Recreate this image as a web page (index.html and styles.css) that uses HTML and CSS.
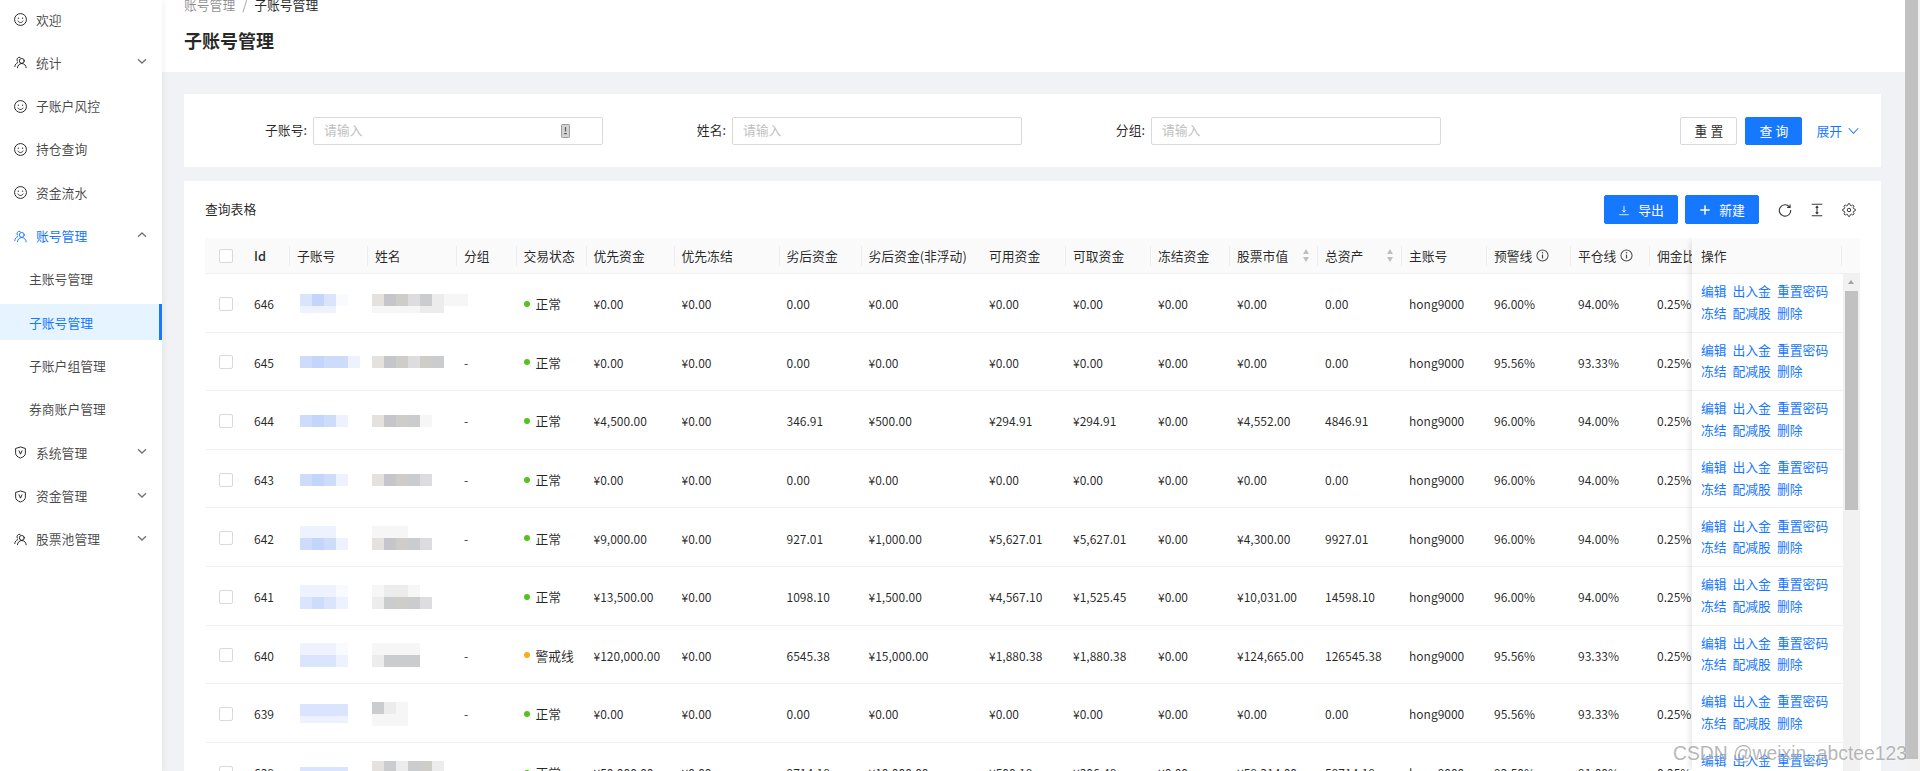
FILE: index.html
```html
<!DOCTYPE html>
<html lang="zh-CN">
<head>
<meta charset="utf-8">
<title>子账号管理</title>
<link rel="stylesheet" href="styles.css">
</head>
<body>
<svg class="defs" aria-hidden="true">
  <symbol id="i-smile" viewBox="0 0 16 16"><circle cx="8" cy="8" r="7.300" fill="none" stroke="currentColor" stroke-width="1.200"/><circle cx="5.400" cy="6.400" r=".8" fill="currentColor"/><circle cx="10.600" cy="6.400" r=".8" fill="currentColor"/><path d="M4.600 9.400c.8 1.500 2 2.300 3.400 2.300s2.600-.8 3.400-2.300" fill="none" stroke="currentColor" stroke-width="1.100"/></symbol>
  <symbol id="i-team" viewBox="0 0 16 16"><g fill="none" stroke="currentColor" stroke-width="1.200" stroke-linecap="round"><circle cx="9.600" cy="6" r="3"/><path d="M4.200 14.500c.2-3 2.400-5.200 5.400-5.200s5.200 2.200 5.400 5.200"/><path d="M7.400 1.600a3.200 3.200 0 0 0-3.400 4.600M4.600 8C2.600 8.800 1.300 10.600 1 13"/></g></symbol>
  <symbol id="i-shield" viewBox="0 0 16 16"><g fill="none" stroke="currentColor" stroke-width="1.200" stroke-linejoin="round"><path d="M8 1.200 14 3v6c0 2.700-2.500 4.600-6 5.800C4.500 13.600 2 11.700 2 9V3z"/><path d="M6 5.500 8 10l2-4.500"/></g></symbol>
  <symbol id="i-down" viewBox="0 0 10 10"><path d="M1 3.200 5 7l4-3.800" fill="none" stroke="currentColor" stroke-width="1.300"/></symbol>
  <symbol id="i-up" viewBox="0 0 10 10"><path d="M1 6.800 5 3l4 3.800" fill="none" stroke="currentColor" stroke-width="1.300"/></symbol>
  <symbol id="i-info" viewBox="0 0 14 14"><circle cx="7" cy="7" r="6" fill="none" stroke="currentColor" stroke-width="1.100"/><path d="M7 6v4.200" stroke="currentColor" stroke-width="1.300"/><circle cx="7" cy="4" r=".8" fill="currentColor"/></symbol>
</svg>

<div class="app">
  <aside class="sidebar">
    <a class="menu-item"><svg class="menu-icon"><use href="#i-smile"/></svg>欢迎</a>
    <a class="menu-item"><svg class="menu-icon"><use href="#i-team"/></svg>统计<svg class="menu-arrow"><use href="#i-down"/></svg></a>
    <a class="menu-item"><svg class="menu-icon"><use href="#i-smile"/></svg>子账户风控</a>
    <a class="menu-item"><svg class="menu-icon"><use href="#i-smile"/></svg>持仓查询</a>
    <a class="menu-item"><svg class="menu-icon"><use href="#i-smile"/></svg>资金流水</a>
    <a class="menu-item is-open"><svg class="menu-icon"><use href="#i-team"/></svg>账号管理<svg class="menu-arrow"><use href="#i-up"/></svg></a>
    <a class="menu-item sub">主账号管理</a>
    <a class="menu-item sub is-active">子账号管理</a>
    <a class="menu-item sub">子账户组管理</a>
    <a class="menu-item sub">券商账户管理</a>
    <a class="menu-item"><svg class="menu-icon"><use href="#i-shield"/></svg>系统管理<svg class="menu-arrow"><use href="#i-down"/></svg></a>
    <a class="menu-item"><svg class="menu-icon"><use href="#i-shield"/></svg>资金管理<svg class="menu-arrow"><use href="#i-down"/></svg></a>
    <a class="menu-item"><svg class="menu-icon"><use href="#i-team"/></svg>股票池管理<svg class="menu-arrow"><use href="#i-down"/></svg></a>
  </aside>

  <main class="content">
    <header class="page-header">
      <nav class="crumbs"><span class="crumb-muted">账号管理</span><span class="crumb-sep">/</span><span>子账号管理</span></nav>
      <h1 class="page-title">子账号管理</h1>
    </header>

    <section class="card filter">
      <label class="field"><span class="field-label">子账号:</span><span class="input"><span class="placeholder">请输入</span><svg class="input-suffix" viewBox="0 0 10 16"><rect x=".5" y=".5" width="9" height="15" rx="1" fill="#d4d4d4" stroke="#8c8c8c"/><path d="M5 3.500v5M3.500 11h3" stroke="#595959" stroke-width="1.400"/></svg></span></label>
      <label class="field"><span class="field-label">姓名:</span><span class="input"><span class="placeholder">请输入</span></span></label>
      <label class="field"><span class="field-label">分组:</span><span class="input"><span class="placeholder">请输入</span></span></label>
      <div class="filter-actions">
        <button class="btn btn-spaced">重置</button>
        <button class="btn btn-primary btn-spaced">查询</button>
        <a class="expand">展开<svg class="expand-arrow" viewBox="0 0 12 8"><path d="M.8 1 6 6.600 11.200 1" fill="none" stroke="currentColor" stroke-width="1.100"/></svg></a>
      </div>
    </section>

    <section class="card table-card">
      <div class="toolbar">
        <span class="toolbar-title">查询表格</span>
        <div class="toolbar-actions">
          <button class="btn btn-primary btn-tool"><svg class="btn-icon" viewBox="0 0 14 14"><path d="M7 2v7.500M4.800 7.300 7 9.500l2.200-2.200M1.500 12.500h11" fill="none" stroke="currentColor"/></svg>导出</button>
          <button class="btn btn-primary btn-tool"><svg class="btn-icon" viewBox="0 0 14 14"><path d="M7 1.500v11M1.500 7h11" fill="none" stroke="currentColor" stroke-width="1.700"/></svg>新建</button>
          <svg class="tool-icon first" viewBox="0 0 16 16"><path d="M13.200 4.600A6.500 6.500 0 1 0 14.500 8M13.800 1.600v3.400h-3.400" fill="none" stroke="currentColor" stroke-width="1.300"/></svg>
          <svg class="tool-icon" viewBox="0 0 16 16"><path d="M2 1.500h12M2 14.500h12M8 3.800v8.400M6.500 5.300 8 3.800l1.500 1.500M6.500 10.700 8 12.200l1.500-1.500" fill="none" stroke="currentColor" stroke-width="1.200"/></svg>
          <svg class="tool-icon" viewBox="0 0 24 24"><g fill="none" stroke="currentColor" stroke-width="1.700"><circle cx="12" cy="12" r="3"/><path d="M19.400 15a1.650 1.650 0 0 0 .33 1.820l.06.06a2 2 0 0 1 0 2.830 2 2 0 0 1-2.830 0l-.06-.06a1.650 1.650 0 0 0-1.820-.33 1.650 1.650 0 0 0-1 1.510V21a2 2 0 0 1-2 2 2 2 0 0 1-2-2v-.09A1.650 1.650 0 0 0 9 19.400a1.650 1.650 0 0 0-1.820.33l-.06.06a2 2 0 0 1-2.830 0 2 2 0 0 1 0-2.830l.06-.06a1.650 1.650 0 0 0 .33-1.820 1.650 1.650 0 0 0-1.510-1H3a2 2 0 0 1-2-2 2 2 0 0 1 2-2h.09A1.650 1.650 0 0 0 4.600 9a1.650 1.650 0 0 0-.33-1.820l-.06-.06a2 2 0 0 1 0-2.830 2 2 0 0 1 2.830 0l.06.06a1.650 1.650 0 0 0 1.820.33H9a1.650 1.650 0 0 0 1-1.510V3a2 2 0 0 1 2-2 2 2 0 0 1 2 2v.09a1.650 1.650 0 0 0 1 1.510 1.650 1.650 0 0 0 1.820-.33l.06-.06a2 2 0 0 1 2.830 0 2 2 0 0 1 0 2.830l-.06.06a1.650 1.650 0 0 0-.33 1.820V9a1.650 1.650 0 0 0 1.510 1H21a2 2 0 0 1 2 2 2 2 0 0 1-2 2h-.09a1.650 1.650 0 0 0-1.510 1z"/></g></svg>
        </div>
      </div>

      <div class="table-box">
        <div class="row head">
          <div class="cell check"><span class="checkbox"></span></div>
          <div class="cell strong">Id</div>
          <div class="cell sep">子账号</div>
          <div class="cell sep">姓名</div>
          <div class="cell sep">分组</div>
          <div class="cell sep">交易状态</div>
          <div class="cell sep">优先资金</div>
          <div class="cell sep">优先冻结</div>
          <div class="cell sep">劣后资金</div>
          <div class="cell sep nowrap">劣后资金(非浮动)</div>
          <div class="cell">可用资金</div>
          <div class="cell sep">可取资金</div>
          <div class="cell sep">冻结资金</div>
          <div class="cell sep sortable">股票市值<span class="sort"><i class="sort-up"></i><i class="sort-down"></i></span></div>
          <div class="cell sep sortable">总资产<span class="sort"><i class="sort-up"></i><i class="sort-down"></i></span></div>
          <div class="cell sep">主账号</div>
          <div class="cell sep">预警线<svg class="info"><use href="#i-info"/></svg></div>
          <div class="cell sep">平仓线<svg class="info"><use href="#i-info"/></svg></div>
          <div class="cell sep nowrap">佣金比例</div>
        </div>

        <div class="row">
          <div class="cell check"><span class="checkbox"></span></div><div class="cell">646</div>
          <div class="cell blur"><div class="mosaic"><div class="line"><span class="b2"></span><span class="b1"></span><span class="b2"></span><span class="b4"></span></div><div class="line short"><span class="b3"></span><span class="b3"></span><span class="b3"></span></div></div></div>
          <div class="cell blur"><div class="mosaic"><div class="line"><span class="g1"></span><span class="g2"></span><span class="g3"></span><span class="g5"></span><span class="g4"></span><span class="g6"></span><span class="g7"></span><span class="g7"></span></div><div class="line short"><span class="g7"></span><span class="g7"></span><span class="g7"></span><span class="g7"></span><span class="g6"></span><span class="g6"></span></div></div></div>
          <div class="cell"></div>
          <div class="cell"><span class="dot ok"></span><span class="status">正常</span></div><div class="cell">¥0.00</div><div class="cell">¥0.00</div><div class="cell">0.00</div><div class="cell">¥0.00</div><div class="cell">¥0.00</div><div class="cell">¥0.00</div><div class="cell">¥0.00</div><div class="cell">¥0.00</div><div class="cell">0.00</div><div class="cell">hong9000</div><div class="cell">96.00%</div><div class="cell">94.00%</div><div class="cell">0.25%</div>
        </div>
        <div class="row">
          <div class="cell check"><span class="checkbox"></span></div><div class="cell">645</div>
          <div class="cell blur"><div class="mosaic"><div class="line"><span class="b0"></span><span class="b1"></span><span class="b0"></span><span class="b0"></span><span class="b3"></span></div></div></div>
          <div class="cell blur"><div class="mosaic"><div class="line"><span class="g1"></span><span class="g2"></span><span class="g3"></span><span class="g5"></span><span class="g3"></span><span class="g4"></span></div></div></div>
          <div class="cell">-</div>
          <div class="cell"><span class="dot ok"></span><span class="status">正常</span></div><div class="cell">¥0.00</div><div class="cell">¥0.00</div><div class="cell">0.00</div><div class="cell">¥0.00</div><div class="cell">¥0.00</div><div class="cell">¥0.00</div><div class="cell">¥0.00</div><div class="cell">¥0.00</div><div class="cell">0.00</div><div class="cell">hong9000</div><div class="cell">95.56%</div><div class="cell">93.33%</div><div class="cell">0.25%</div>
        </div>
        <div class="row">
          <div class="cell check"><span class="checkbox"></span></div><div class="cell">644</div>
          <div class="cell blur"><div class="mosaic"><div class="line"><span class="b0"></span><span class="b1"></span><span class="b0"></span><span class="b3"></span></div></div></div>
          <div class="cell blur"><div class="mosaic"><div class="line"><span class="g1"></span><span class="g2"></span><span class="g3"></span><span class="g4"></span><span class="g7"></span></div></div></div>
          <div class="cell">-</div>
          <div class="cell"><span class="dot ok"></span><span class="status">正常</span></div><div class="cell">¥4,500.00</div><div class="cell">¥0.00</div><div class="cell">346.91</div><div class="cell">¥500.00</div><div class="cell">¥294.91</div><div class="cell">¥294.91</div><div class="cell">¥0.00</div><div class="cell">¥4,552.00</div><div class="cell">4846.91</div><div class="cell">hong9000</div><div class="cell">96.00%</div><div class="cell">94.00%</div><div class="cell">0.25%</div>
        </div>
        <div class="row">
          <div class="cell check"><span class="checkbox"></span></div><div class="cell">643</div>
          <div class="cell blur"><div class="mosaic"><div class="line"><span class="b0"></span><span class="b1"></span><span class="b0"></span><span class="b3"></span></div></div></div>
          <div class="cell blur"><div class="mosaic"><div class="line"><span class="g1"></span><span class="g2"></span><span class="g3"></span><span class="g4"></span><span class="g5"></span></div></div></div>
          <div class="cell">-</div>
          <div class="cell"><span class="dot ok"></span><span class="status">正常</span></div><div class="cell">¥0.00</div><div class="cell">¥0.00</div><div class="cell">0.00</div><div class="cell">¥0.00</div><div class="cell">¥0.00</div><div class="cell">¥0.00</div><div class="cell">¥0.00</div><div class="cell">¥0.00</div><div class="cell">0.00</div><div class="cell">hong9000</div><div class="cell">96.00%</div><div class="cell">94.00%</div><div class="cell">0.25%</div>
        </div>
        <div class="row">
          <div class="cell check"><span class="checkbox"></span></div><div class="cell">642</div>
          <div class="cell blur"><div class="mosaic"><div class="line"><span class="b3"></span><span class="b3"></span><span class="b3"></span></div><div class="line"><span class="b0"></span><span class="b1"></span><span class="b0"></span><span class="b3"></span></div></div></div>
          <div class="cell blur"><div class="mosaic"><div class="line"><span class="g7"></span><span class="g7"></span><span class="g7"></span></div><div class="line"><span class="g1"></span><span class="g2"></span><span class="g3"></span><span class="g4"></span><span class="g5"></span></div></div></div>
          <div class="cell">-</div>
          <div class="cell"><span class="dot ok"></span><span class="status">正常</span></div><div class="cell">¥9,000.00</div><div class="cell">¥0.00</div><div class="cell">927.01</div><div class="cell">¥1,000.00</div><div class="cell">¥5,627.01</div><div class="cell">¥5,627.01</div><div class="cell">¥0.00</div><div class="cell">¥4,300.00</div><div class="cell">9927.01</div><div class="cell">hong9000</div><div class="cell">96.00%</div><div class="cell">94.00%</div><div class="cell">0.25%</div>
        </div>
        <div class="row">
          <div class="cell check"><span class="checkbox"></span></div><div class="cell">641</div>
          <div class="cell blur"><div class="mosaic"><div class="line"><span class="b3"></span><span class="b3"></span><span class="b3"></span><span class="b4"></span></div><div class="line"><span class="b2"></span><span class="b0"></span><span class="b2"></span><span class="b3"></span></div></div></div>
          <div class="cell blur"><div class="mosaic"><div class="line"><span class="g7"></span><span class="g6"></span><span class="g6"></span><span class="g7"></span></div><div class="line"><span class="g6"></span><span class="g4"></span><span class="g3"></span><span class="g4"></span><span class="g5"></span></div></div></div>
          <div class="cell"></div>
          <div class="cell"><span class="dot ok"></span><span class="status">正常</span></div><div class="cell">¥13,500.00</div><div class="cell">¥0.00</div><div class="cell">1098.10</div><div class="cell">¥1,500.00</div><div class="cell">¥4,567.10</div><div class="cell">¥1,525.45</div><div class="cell">¥0.00</div><div class="cell">¥10,031.00</div><div class="cell">14598.10</div><div class="cell">hong9000</div><div class="cell">96.00%</div><div class="cell">94.00%</div><div class="cell">0.25%</div>
        </div>
        <div class="row">
          <div class="cell check"><span class="checkbox"></span></div><div class="cell">640</div>
          <div class="cell blur"><div class="mosaic"><div class="line"><span class="b3"></span><span class="b3"></span><span class="b3"></span><span class="b4"></span></div><div class="line"><span class="b2"></span><span class="b2"></span><span class="b2"></span><span class="b3"></span></div></div></div>
          <div class="cell blur"><div class="mosaic"><div class="line"><span class="g7"></span><span class="g7"></span><span class="g7"></span><span class="g7"></span></div><div class="line"><span class="g6"></span><span class="g4"></span><span class="g4"></span><span class="g4"></span></div></div></div>
          <div class="cell">-</div>
          <div class="cell"><span class="dot warn"></span><span class="status">警戒线</span></div><div class="cell">¥120,000.00</div><div class="cell">¥0.00</div><div class="cell">6545.38</div><div class="cell">¥15,000.00</div><div class="cell">¥1,880.38</div><div class="cell">¥1,880.38</div><div class="cell">¥0.00</div><div class="cell">¥124,665.00</div><div class="cell">126545.38</div><div class="cell">hong9000</div><div class="cell">95.56%</div><div class="cell">93.33%</div><div class="cell">0.25%</div>
        </div>
        <div class="row">
          <div class="cell check"><span class="checkbox"></span></div><div class="cell">639</div>
          <div class="cell blur"><div class="mosaic"><div class="line"><span class="b2"></span><span class="b2"></span><span class="b2"></span><span class="b2"></span></div><div class="line short"><span class="b3"></span><span class="b3"></span><span class="b3"></span><span class="b3"></span></div></div></div>
          <div class="cell blur"><div class="mosaic"><div class="line"><span class="g4"></span><span class="g6"></span><span class="g7"></span></div><div class="line"><span class="g7"></span><span class="g7"></span><span class="g7"></span></div></div></div>
          <div class="cell">-</div>
          <div class="cell"><span class="dot ok"></span><span class="status">正常</span></div><div class="cell">¥0.00</div><div class="cell">¥0.00</div><div class="cell">0.00</div><div class="cell">¥0.00</div><div class="cell">¥0.00</div><div class="cell">¥0.00</div><div class="cell">¥0.00</div><div class="cell">¥0.00</div><div class="cell">0.00</div><div class="cell">hong9000</div><div class="cell">95.56%</div><div class="cell">93.33%</div><div class="cell">0.25%</div>
        </div>
        <div class="row">
          <div class="cell check"><span class="checkbox"></span></div><div class="cell">638</div>
          <div class="cell blur"><div class="mosaic"><div class="line"><span class="b2"></span><span class="b2"></span><span class="b2"></span><span class="b2"></span></div></div></div>
          <div class="cell blur"><div class="mosaic"><div class="line"><span class="g1"></span><span class="g4"></span><span class="g6"></span><span class="g4"></span><span class="g3"></span><span class="g6"></span></div><div class="line"><span class="g7"></span><span class="g6"></span><span class="g6"></span><span class="g6"></span></div></div></div>
          <div class="cell">-</div>
          <div class="cell"><span class="dot ok"></span><span class="status">正常</span></div><div class="cell">¥50,000.00</div><div class="cell">¥0.00</div><div class="cell">9714.18</div><div class="cell">¥10,000.00</div><div class="cell">¥500.18</div><div class="cell">¥306.48</div><div class="cell">¥0.00</div><div class="cell">¥58,314.00</div><div class="cell">59714.18</div><div class="cell">hong9000</div><div class="cell">92.50%</div><div class="cell">91.00%</div><div class="cell">0.25%</div>
        </div>

        <div class="fixed-col">
          <div class="fixed-head">操作</div>
          <div class="fixed-body">
            <div class="fixed-rows">
              <div class="op-row"><a>编辑</a><a>出入金</a><a>重置密码</a><a>冻结</a><a>配减股</a><a>删除</a></div>
              <div class="op-row"><a>编辑</a><a>出入金</a><a>重置密码</a><a>冻结</a><a>配减股</a><a>删除</a></div>
              <div class="op-row"><a>编辑</a><a>出入金</a><a>重置密码</a><a>冻结</a><a>配减股</a><a>删除</a></div>
              <div class="op-row"><a>编辑</a><a>出入金</a><a>重置密码</a><a>冻结</a><a>配减股</a><a>删除</a></div>
              <div class="op-row"><a>编辑</a><a>出入金</a><a>重置密码</a><a>冻结</a><a>配减股</a><a>删除</a></div>
              <div class="op-row"><a>编辑</a><a>出入金</a><a>重置密码</a><a>冻结</a><a>配减股</a><a>删除</a></div>
              <div class="op-row"><a>编辑</a><a>出入金</a><a>重置密码</a><a>冻结</a><a>配减股</a><a>删除</a></div>
              <div class="op-row"><a>编辑</a><a>出入金</a><a>重置密码</a><a>冻结</a><a>配减股</a><a>删除</a></div>
              <div class="op-row"><a>编辑</a><a>出入金</a><a>重置密码</a><a>冻结</a><a>配减股</a><a>删除</a></div>
            </div>
            <div class="inner-scroll"><i class="inner-arrow"></i><i class="inner-thumb"></i></div>
          </div>
        </div>
      </div>
    </section>
  </main>

  <div class="page-scroll"><i class="page-thumb"></i></div>
</div>
<div class="watermark">CSDN @weixin_abctee123</div>
</body>
</html>
```

FILE: styles.css
```css
* { box-sizing: border-box; }
html, body { margin: 0; height: 771px; overflow: hidden; }
body {
  font-family: "Noto Sans CJK SC", "Noto Sans", sans-serif;
  font-size: 12.800px;
  color: rgba(0, 0, 0, .85);
  background: #f0f2f5;
}
.defs { display: none; }
.app { display: flex; height: 771px; }

/* sidebar */
.sidebar {
  flex: 0 0 162px;
  background: #fff;
  display: flex;
  flex-direction: column;
  gap: 7.33px;
  padding-top: 1px;
  box-shadow: 2px 0 6px rgba(0, 21, 41, .05);
  position: relative;
  z-index: 1;
}
.menu-item {
  height: 36px;
  display: flex;
  align-items: center;
  padding-left: 14px;
  color: rgba(0, 0, 0, .72);
}
.menu-icon { width: 13px; height: 13px; margin-right: 9px; margin-top: 1px; flex: none; color: rgba(0, 0, 0, .85); }
.menu-arrow { width: 10px; height: 10px; margin-left: auto; margin-right: 15px; margin-top: -2px; color: rgba(0, 0, 0, .55); }
.menu-item.is-open, .menu-item.is-open .menu-icon { color: #1677ff; }
.menu-item.sub { padding-left: 29px; }
.menu-item.is-active { color: #1677ff; background: #e6f4ff; border-right: 3px solid #1677ff; }

/* content */
.content { flex: 1; min-width: 0; display: flex; flex-direction: column; }
.page-header { height: 72px; background: #fff; padding-left: 22px; flex: none; }
.crumbs { display: flex; height: 22px; margin-top: -6px; line-height: 22px; }
.crumb-muted { color: rgba(0, 0, 0, .45); }
.crumb-sep { margin: 0 7px; color: rgba(0, 0, 0, .45); }
.page-title { margin: 11px 0 0; font-size: 18px; line-height: 26px; font-weight: 600; }

.card { background: #fff; margin: 0 24px 0 22px; }
.filter {
  margin-top: 22px;
  height: 73px;
  flex: none;
  display: grid;
  grid-template-columns: repeat(3, 419px) 1fr;
  align-items: center;
  padding-right: 22px;
}
.field { display: flex; justify-content: flex-end; align-items: center; gap: 6px; }
.field-label, .placeholder, .toolbar-title { padding-bottom: 2px; }
.input {
  width: 290px;
  height: 28px;
  border: 1px solid #d9d9d9;
  border-radius: 2px;
  display: flex;
  align-items: center;
  justify-content: space-between;
  padding: 0 32px 0 10px;
}
.placeholder { color: #bfbfbf; }
.input-suffix { width: 9px; height: 14px; }
.filter-actions { display: flex; justify-content: flex-end; align-items: center; gap: 8px; }
.btn {
  height: 28px;
  border: 1px solid #d9d9d9;
  border-radius: 2px;
  background: #fff;
  font: inherit;
  color: rgba(0, 0, 0, .85);
  padding: 0;
  display: inline-flex;
  align-items: center;
  justify-content: center;
}
.btn-spaced { width: 57px; letter-spacing: 3px; padding-left: 3px; }
.btn-primary { background: #1677ff; border-color: #1677ff; color: #fff; }
.expand { display: flex; align-items: center; color: #1677ff; margin-left: 6px; }
.expand-arrow { width: 11px; height: 8px; margin-left: 6px; }

/* table card */
.table-card { margin-top: 14px; flex: 1; min-height: 0; padding: 14px 21px 0; overflow: hidden; }
.toolbar { display: flex; justify-content: space-between; align-items: center; height: 29px; margin-bottom: 14px; }
.toolbar-actions { display: flex; align-items: center; gap: 7px; }
.btn-tool { width: 74px; height: 29px; gap: 8px; }
.btn-icon { width: 12px; height: 12px; }
.tool-icon { width: 14px; height: 14px; margin-left: 11px; color: rgba(0, 0, 0, .78); }
.tool-icon.first { margin-left: 12px; }
.tool-icon:last-child { margin-right: 4px; }

.table-box { position: relative; height: 533px; overflow: hidden; }
.row {
  display: grid;
  grid-template-columns: 41px 43px 78px 89px 59.5px 70px 88px 105px 82px 120.5px 84px 85px 79px 88px 84px 85px 84px 79px 1fr;
  height: 58.6px;
  padding-top: 2px;
  align-items: center;
  border-bottom: 1px solid #f0f0f0;
  font-size: 12px;
}
.row.head { height: 36px; padding-top: 0; background: #fafafa; font-size: 12.800px; }
.status { font-size: 12.800px; }
.cell { padding-left: 8px; white-space: nowrap; position: relative; display: flex; align-items: center; min-width: 0; }
.cell.check { padding-left: 14px; }
.cell.strong { font-weight: 500; }
.cell.blur { padding-left: 11px; }
.cell.blur + .cell.blur { padding-left: 5px; }
.head .cell.sep::before {
  content: "";
  position: absolute;
  left: 0;
  top: 50%;
  width: 1px;
  height: 20px;
  margin-top: -10px;
  background: #ededed;
}
.checkbox { width: 14px; height: 14px; border: 1px solid #d9d9d9; border-radius: 2px; background: #fff; display: block; }
.sortable { justify-content: space-between; padding-right: 8px; }
.sort { display: flex; flex-direction: column; gap: 3px; }
.sort i { display: block; width: 0; height: 0; border-left: 3.500px solid transparent; border-right: 3.500px solid transparent; }
.sort-up { border-bottom: 5px solid #bfbfbf; }
.sort-down { border-top: 5px solid #bfbfbf; }
.info { width: 13px; height: 13px; margin-left: 4px; color: rgba(0, 0, 0, .7); }
.dot { width: 6px; height: 6px; border-radius: 50%; margin-right: 6px; flex: none; }
.dot.ok { background: #52c41a; }
.dot.warn { background: #faad14; }

/* mosaics hiding personal data */
.mosaic { display: flex; flex-direction: column; }
.line { display: flex; height: 12px; }
.line.short { height: 7px; }
.line span { width: 12px; }
.b0 { background: #cddcfb; }
.b1 { background: #c4d5fc; }
.b2 { background: #dae5fd; }
.b3 { background: #edf2fe; }
.b4 { background: #f8faff; }
.g1 { background: #e5e1df; }
.g2 { background: #c5c6c9; }
.g3 { background: #cfcdc9; }
.g4 { background: #cbcccd; }
.g5 { background: #dddde0; }
.g6 { background: #ececec; }
.g7 { background: #f6f6f7; }

/* fixed operations column */
.fixed-col {
  position: absolute;
  top: 0;
  right: 0;
  bottom: 0;
  width: 168px;
  box-shadow: -4px 0 6px -2px rgba(0, 0, 0, .1);
  background: #fff;
  display: flex;
  flex-direction: column;
}
.fixed-head {
  flex: none;
  height: 36px;
  background: #fafafa;
  border-bottom: 1px solid #f0f0f0;
  display: flex;
  align-items: center;
  padding-left: 9px;
  position: relative;
}
.fixed-head::after {
  content: "";
  position: absolute;
  right: 18px;
  top: 8px;
  width: 1px;
  height: 20px;
  background: #ededed;
}
.fixed-body { flex: 1; display: flex; min-height: 0; }
.fixed-rows { flex: 1; min-width: 0; }
.op-row {
  height: 58.6px;
  border-bottom: 1px solid #f0f0f0;
  padding-left: 9px;
  display: grid;
  grid-template-columns: 25px 38px 52px;
  grid-auto-rows: 21.500px;
  column-gap: 6.500px;
  align-content: center;
  color: #1677ff;
  white-space: nowrap;
}
.inner-scroll { flex: 0 0 17px; background: #f1f1f1; position: relative; }
.inner-arrow {
  position: absolute;
  top: 6px;
  left: 5px;
  width: 0;
  height: 0;
  border-left: 3.500px solid transparent;
  border-right: 3.500px solid transparent;
  border-bottom: 4px solid #a3a3a3;
}
.inner-thumb { position: absolute; top: 17px; left: 2px; width: 13px; height: 219px; background: #c1c1c1; }

/* page scrollbar */
.page-scroll { flex: 0 0 15px; background: #f1f1f1; position: relative; }
.page-thumb { display: block; width: 13px; height: 759px; background: #c1c1c1; }

.watermark {
  position: absolute;
  left: 1673px;
  top: 741px;
  font-family: "Liberation Sans", sans-serif;
  font-size: 19.300px;
  line-height: 26px;
  color: rgba(120, 120, 120, .55);
  text-shadow: 0 0 2px rgba(255, 255, 255, .8);
  white-space: nowrap;
}
```
